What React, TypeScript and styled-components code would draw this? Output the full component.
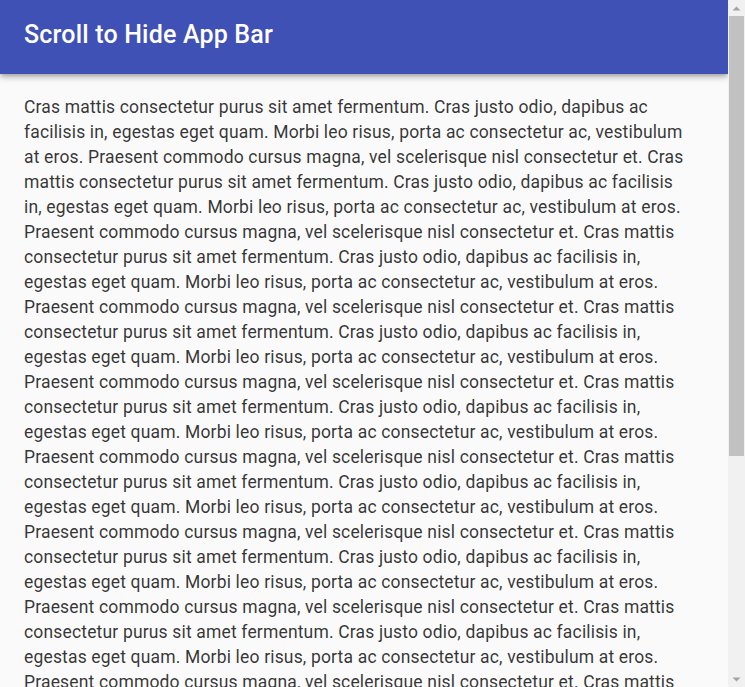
import React from "react";
import styled, { createGlobalStyle } from "styled-components";

const Global = createGlobalStyle`
  html, body { margin: 0; padding: 0; height: 100%; overflow: hidden; }
  body { background: #fafafa; font-family: Roboto, "Liberation Sans", Arial, sans-serif; }
`;

const Page = styled.div`
  display: flex;
  height: 100vh;
  width: 100vw;
`;

const Main = styled.div`
  flex: 1;
  min-width: 0;
  display: flex;
  flex-direction: column;
  overflow: hidden;
`;

const AppBar = styled.header`
  position: relative;
  z-index: 2;
  flex: none;
  box-sizing: border-box;
  height: 74px;
  padding: 15px 24px 0;
  background: #3f51b5;
  color: #fff;
  box-shadow: 0px 2px 4px -1px rgba(0,0,0,0.2), 0px 4px 5px 0px rgba(0,0,0,0.14), 0px 1px 10px 0px rgba(0,0,0,0.12);
`;

const Title = styled.h6`
  margin: 0;
  font-family: Roboto, "Liberation Sans", Arial, sans-serif;
  font-weight: 500;
  font-size: 25px;
  line-height: 40px;
  letter-spacing: 0.0075em;
`;

const Content = styled.main`
  padding: 21px 38px 0 24px;
`;

const Body = styled.p`
  margin: 0;
  font-size: 17.5px;
  line-height: 25px;
  color: rgba(0, 0, 0, 0.8);
  letter-spacing: 0.00938em;
`;

const Scrollbar = styled.div`
  flex: none;
  width: 17px;
  background: #f1f1f1;
  display: flex;
  flex-direction: column;
`;

const ArrowButton = styled.div`
  height: 16px;
  display: flex;
  align-items: center;
  justify-content: center;
  flex: none;
`;

const Track = styled.div`
  flex: 1;
  display: flex;
  flex-direction: column;
`;

const Thumb = styled.div`
  height: 440px;
  margin: 0 1px;
  background: #c1c1c1;
`;

const Arrow = ({ up }: { up?: boolean }) => (
  <svg width="9" height="5" viewBox="0 0 9 5">
    <path d={up ? "M0.5 4.5 L4.5 0.5 L8.5 4.5 Z" : "M0.5 0.5 L4.5 4.5 L8.5 0.5 Z"} fill="#a3a3a3" />
  </svg>
);

const paragraph = [...new Array(12)]
  .map(
    () =>
      "Cras mattis consectetur purus sit amet fermentum. Cras justo odio, dapibus ac facilisis in, egestas eget quam. Morbi leo risus, porta ac consectetur ac, vestibulum at eros. Praesent commodo cursus magna, vel scelerisque nisl consectetur et."
  )
  .join(" ");

export default function App() {
  return (
    <>
      <Global />
      <Page>
        <Main>
          <AppBar>
            <Title>Scroll to Hide App Bar</Title>
          </AppBar>
          <Content>
            <Body>{paragraph}</Body>
          </Content>
        </Main>
        <Scrollbar>
          <ArrowButton>
            <Arrow up />
          </ArrowButton>
          <Track>
            <Thumb />
          </Track>
          <ArrowButton>
            <Arrow />
          </ArrowButton>
        </Scrollbar>
      </Page>
    </>
  );
}
